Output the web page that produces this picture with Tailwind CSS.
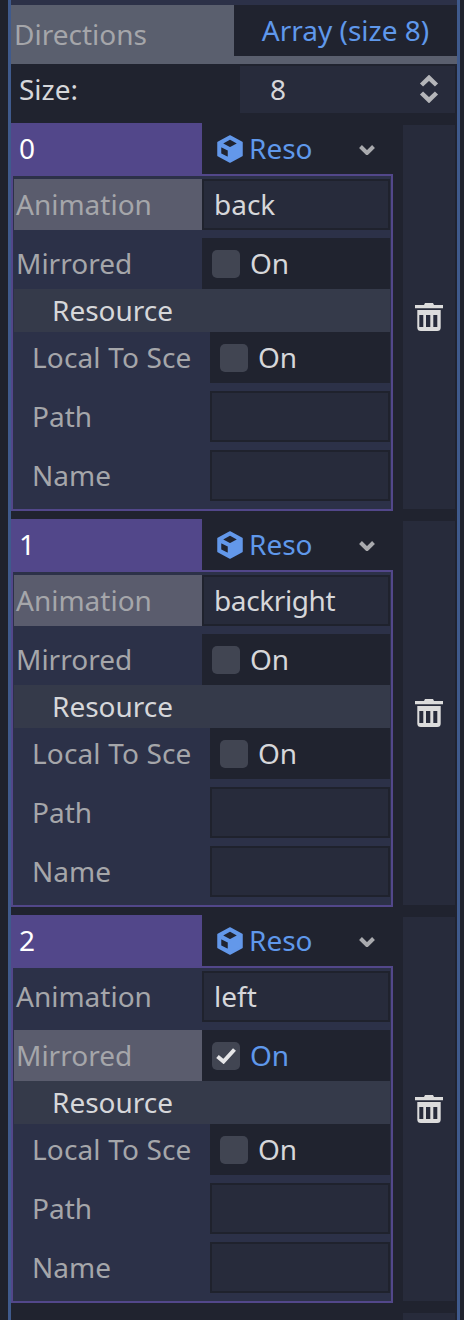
<!DOCTYPE html>
<html><head><script src="https://cdn.jsdelivr.net/npm/@tailwindcss/browser@4"></script></head>
<body class="m-0 bg-[#20232f]">
<div class="w-[464px] h-[1320px] overflow-hidden bg-[#1f222d] font-['Noto_Sans',sans-serif] text-[28px] leading-[27px] text-[#d6d7da]">
<div class="ml-[8px] mr-[4px] h-full border-x-[3px] border-[#3f5a8c] bg-[#20232f]">
  <div class="h-[5px] bg-[#2c3148]"></div>
  <div class="h-[59px] bg-[#5a5f6e] flex items-start">
    <div class="w-[223px] h-[59px] flex items-center pl-[3px] text-[#a5a6aa]">Directions</div>
    <div class="flex-1 h-[51px] bg-[#20232f] flex items-center justify-center text-[#5f98eb]">Array (size 8)</div>
  </div>
  <div class="h-[59px] flex items-start pt-[2px]">
    <div class="w-[229px] h-[47px] flex items-center pl-[8px]">Size:</div>
    <div class="w-[215px] h-[47px] bg-[#272b3b] flex items-center pl-[30px] relative">8
      <svg class="absolute left-[179px] top-[9px]" width="20" height="28" viewBox="0 0 20 28" fill="none" stroke="#b4b5b9" stroke-width="4.5"><path d="M2.5 10 10 2.8 17.5 10M2.5 18 10 25.2 17.5 18"/></svg>
    </div>
  </div>

  <div class="flex flex-col gap-[8px]">
    <div class="flex h-[388px] items-start">
      <div class="w-[382px]">
        <div class="h-[51px] flex">
          <div class="w-[191px] bg-[#52478a] text-white flex items-center pl-[8px]">0</div>
          <div class="flex-1 flex items-center pl-[14px] text-[#5f98eb] relative">
            <svg width="28" height="28" viewBox="0 0 28 28"><path fill="#6398ea" stroke="#6398ea" stroke-width="1.5" stroke-linejoin="round" fill-rule="evenodd" d="M14 1 26 7.5V20.5L14 27 2 20.5V7.5ZM14 3.8 5.5 8.5 14 13 22.5 8.5ZM4.5 11V19L12.5 23V15Z"/></svg>
            <span class="ml-[5px]">Reso</span>
            <svg class="absolute left-[157px] top-[22px]" width="16" height="10" viewBox="0 0 16 10" fill="none" stroke="#a9aaae" stroke-width="4"><path d="M1.5 1.5 8 8 14.5 1.5"/></svg>
          </div>
        </div>
        <div class="h-[337px] border-2 border-[#52478a] bg-[#2c3148] px-[1px] pt-[3px]">
          <div class="flex h-[51px] bg-[#5a5c6d] text-[#a5a6aa]"><div class="w-[188px] flex items-center pl-[2px]">Animation</div><div class="flex-1 bg-[#272b3b] border-2 border-[#1f222d] flex items-center pl-[10px] text-[#d6d7da]">back</div></div>
          <div class="flex h-[51px] mt-[8px] text-[#a5a6aa]"><div class="w-[188px] flex items-center pl-[2px]">Mirrored</div><div class="flex-1 bg-[#20232f] flex items-center pl-[10px] text-[#d6d7da]"><span class="w-[28px] h-[28px] rounded-[5px] bg-[#414552] mr-[10px]"></span>On</div></div>
          <div class="h-[43px] bg-[#353a4a] flex items-center pl-[38px]">Resource</div>
          <div class="flex h-[51px] text-[#a5a6aa]"><div class="w-[196px] flex items-center pl-[18px] whitespace-nowrap overflow-hidden tracking-[0.15px]">Local To Sce</div><div class="flex-1 bg-[#20232f] flex items-center pl-[10px] text-[#d6d7da]"><span class="w-[28px] h-[28px] rounded-[5px] bg-[#414552] mr-[10px]"></span>On</div></div>
          <div class="flex h-[51px] mt-[8px] text-[#a5a6aa]"><div class="w-[196px] flex items-center pl-[18px]">Path</div><div class="flex-1 bg-[#272b3b] border-2 border-[#1f222d]"></div></div>
          <div class="flex h-[51px] mt-[8px] text-[#a5a6aa]"><div class="w-[196px] flex items-center pl-[18px]">Name</div><div class="flex-1 bg-[#272b3b] border-2 border-[#1f222d]"></div></div>
        </div>
      </div>
      <div class="ml-[10px] mt-[2px] w-[52px] h-[384px] bg-[#272b3b] flex items-center justify-center">
        <svg width="28" height="28" viewBox="0 0 28 28"><path fill="#dcdcdc" fill-rule="evenodd" d="M9 2 10 0H18L19 2H28V5.3H0V2ZM2.3 7H25.7V24.5Q25.7 28 22.2 28H5.8Q2.3 28 2.3 24.5ZM4.3 12V24H8.3V12ZM11 12V24H15.3V12ZM18.3 12V24H22.3V12Z"/></svg>
      </div>
    </div>

    <div class="flex h-[388px] items-start">
      <div class="w-[382px]">
        <div class="h-[51px] flex">
          <div class="w-[191px] bg-[#52478a] text-white flex items-center pl-[8px]">1</div>
          <div class="flex-1 flex items-center pl-[14px] text-[#5f98eb] relative">
            <svg width="28" height="28" viewBox="0 0 28 28"><path fill="#6398ea" stroke="#6398ea" stroke-width="1.5" stroke-linejoin="round" fill-rule="evenodd" d="M14 1 26 7.5V20.5L14 27 2 20.5V7.5ZM14 3.8 5.5 8.5 14 13 22.5 8.5ZM4.5 11V19L12.5 23V15Z"/></svg>
            <span class="ml-[5px]">Reso</span>
            <svg class="absolute left-[157px] top-[22px]" width="16" height="10" viewBox="0 0 16 10" fill="none" stroke="#a9aaae" stroke-width="4"><path d="M1.5 1.5 8 8 14.5 1.5"/></svg>
          </div>
        </div>
        <div class="h-[337px] border-2 border-[#52478a] bg-[#2c3148] px-[1px] pt-[3px]">
          <div class="flex h-[51px] bg-[#5a5c6d] text-[#a5a6aa]"><div class="w-[188px] flex items-center pl-[2px]">Animation</div><div class="flex-1 bg-[#272b3b] border-2 border-[#1f222d] flex items-center pl-[10px] text-[#d6d7da] tracking-[-0.4px]">backright</div></div>
          <div class="flex h-[51px] mt-[8px] text-[#a5a6aa]"><div class="w-[188px] flex items-center pl-[2px]">Mirrored</div><div class="flex-1 bg-[#20232f] flex items-center pl-[10px] text-[#d6d7da]"><span class="w-[28px] h-[28px] rounded-[5px] bg-[#414552] mr-[10px]"></span>On</div></div>
          <div class="h-[43px] bg-[#353a4a] flex items-center pl-[38px]">Resource</div>
          <div class="flex h-[51px] text-[#a5a6aa]"><div class="w-[196px] flex items-center pl-[18px] whitespace-nowrap overflow-hidden tracking-[0.15px]">Local To Sce</div><div class="flex-1 bg-[#20232f] flex items-center pl-[10px] text-[#d6d7da]"><span class="w-[28px] h-[28px] rounded-[5px] bg-[#414552] mr-[10px]"></span>On</div></div>
          <div class="flex h-[51px] mt-[8px] text-[#a5a6aa]"><div class="w-[196px] flex items-center pl-[18px]">Path</div><div class="flex-1 bg-[#272b3b] border-2 border-[#1f222d]"></div></div>
          <div class="flex h-[51px] mt-[8px] text-[#a5a6aa]"><div class="w-[196px] flex items-center pl-[18px]">Name</div><div class="flex-1 bg-[#272b3b] border-2 border-[#1f222d]"></div></div>
        </div>
      </div>
      <div class="ml-[10px] mt-[2px] w-[52px] h-[384px] bg-[#272b3b] flex items-center justify-center">
        <svg width="28" height="28" viewBox="0 0 28 28"><path fill="#dcdcdc" fill-rule="evenodd" d="M9 2 10 0H18L19 2H28V5.3H0V2ZM2.3 7H25.7V24.5Q25.7 28 22.2 28H5.8Q2.3 28 2.3 24.5ZM4.3 12V24H8.3V12ZM11 12V24H15.3V12ZM18.3 12V24H22.3V12Z"/></svg>
      </div>
    </div>

    <div class="flex h-[388px] items-start">
      <div class="w-[382px]">
        <div class="h-[51px] flex">
          <div class="w-[191px] bg-[#52478a] text-white flex items-center pl-[8px]">2</div>
          <div class="flex-1 flex items-center pl-[14px] text-[#5f98eb] relative">
            <svg width="28" height="28" viewBox="0 0 28 28"><path fill="#6398ea" stroke="#6398ea" stroke-width="1.5" stroke-linejoin="round" fill-rule="evenodd" d="M14 1 26 7.5V20.5L14 27 2 20.5V7.5ZM14 3.8 5.5 8.5 14 13 22.5 8.5ZM4.5 11V19L12.5 23V15Z"/></svg>
            <span class="ml-[5px]">Reso</span>
            <svg class="absolute left-[157px] top-[22px]" width="16" height="10" viewBox="0 0 16 10" fill="none" stroke="#a9aaae" stroke-width="4"><path d="M1.5 1.5 8 8 14.5 1.5"/></svg>
          </div>
        </div>
        <div class="h-[337px] border-2 border-[#52478a] bg-[#2c3148] px-[1px] pt-[3px]">
          <div class="flex h-[51px] text-[#a5a6aa]"><div class="w-[188px] flex items-center pl-[2px]">Animation</div><div class="flex-1 bg-[#272b3b] border-2 border-[#1f222d] flex items-center pl-[10px] text-[#d6d7da]">left</div></div>
          <div class="flex h-[51px] mt-[8px] text-[#a5a6aa]"><div class="w-[188px] bg-[#5a5c6d] flex items-center pl-[2px]">Mirrored</div><div class="flex-1 bg-[#20232f] flex items-center pl-[10px] text-[#5f98eb]"><span class="w-[28px] h-[28px] rounded-[5px] bg-[#414552] mr-[10px] flex items-center justify-center"><svg width="20" height="16" viewBox="0 0 20 16" fill="none" stroke="#e6e6e8" stroke-width="4"><path d="M1.5 8.5 7.5 13.5 18.5 1.5"/></svg></span>On</div></div>
          <div class="h-[43px] bg-[#353a4a] flex items-center pl-[38px]">Resource</div>
          <div class="flex h-[51px] text-[#a5a6aa]"><div class="w-[196px] flex items-center pl-[18px] whitespace-nowrap overflow-hidden tracking-[0.15px]">Local To Sce</div><div class="flex-1 bg-[#20232f] flex items-center pl-[10px] text-[#d6d7da]"><span class="w-[28px] h-[28px] rounded-[5px] bg-[#414552] mr-[10px]"></span>On</div></div>
          <div class="flex h-[51px] mt-[8px] text-[#a5a6aa]"><div class="w-[196px] flex items-center pl-[18px]">Path</div><div class="flex-1 bg-[#272b3b] border-2 border-[#1f222d]"></div></div>
          <div class="flex h-[51px] mt-[8px] text-[#a5a6aa]"><div class="w-[196px] flex items-center pl-[18px]">Name</div><div class="flex-1 bg-[#272b3b] border-2 border-[#1f222d]"></div></div>
        </div>
      </div>
      <div class="ml-[10px] mt-[2px] w-[52px] h-[384px] bg-[#272b3b] flex items-center justify-center">
        <svg width="28" height="28" viewBox="0 0 28 28"><path fill="#dcdcdc" fill-rule="evenodd" d="M9 2 10 0H18L19 2H28V5.3H0V2ZM2.3 7H25.7V24.5Q25.7 28 22.2 28H5.8Q2.3 28 2.3 24.5ZM4.3 12V24H8.3V12ZM11 12V24H15.3V12ZM18.3 12V24H22.3V12Z"/></svg>
      </div>
    </div>
    <div class="ml-[392px] w-[52px] h-[20px] mt-[2px] bg-[#272b3b]"></div>
  </div>
</div>
</div>
</body></html>
